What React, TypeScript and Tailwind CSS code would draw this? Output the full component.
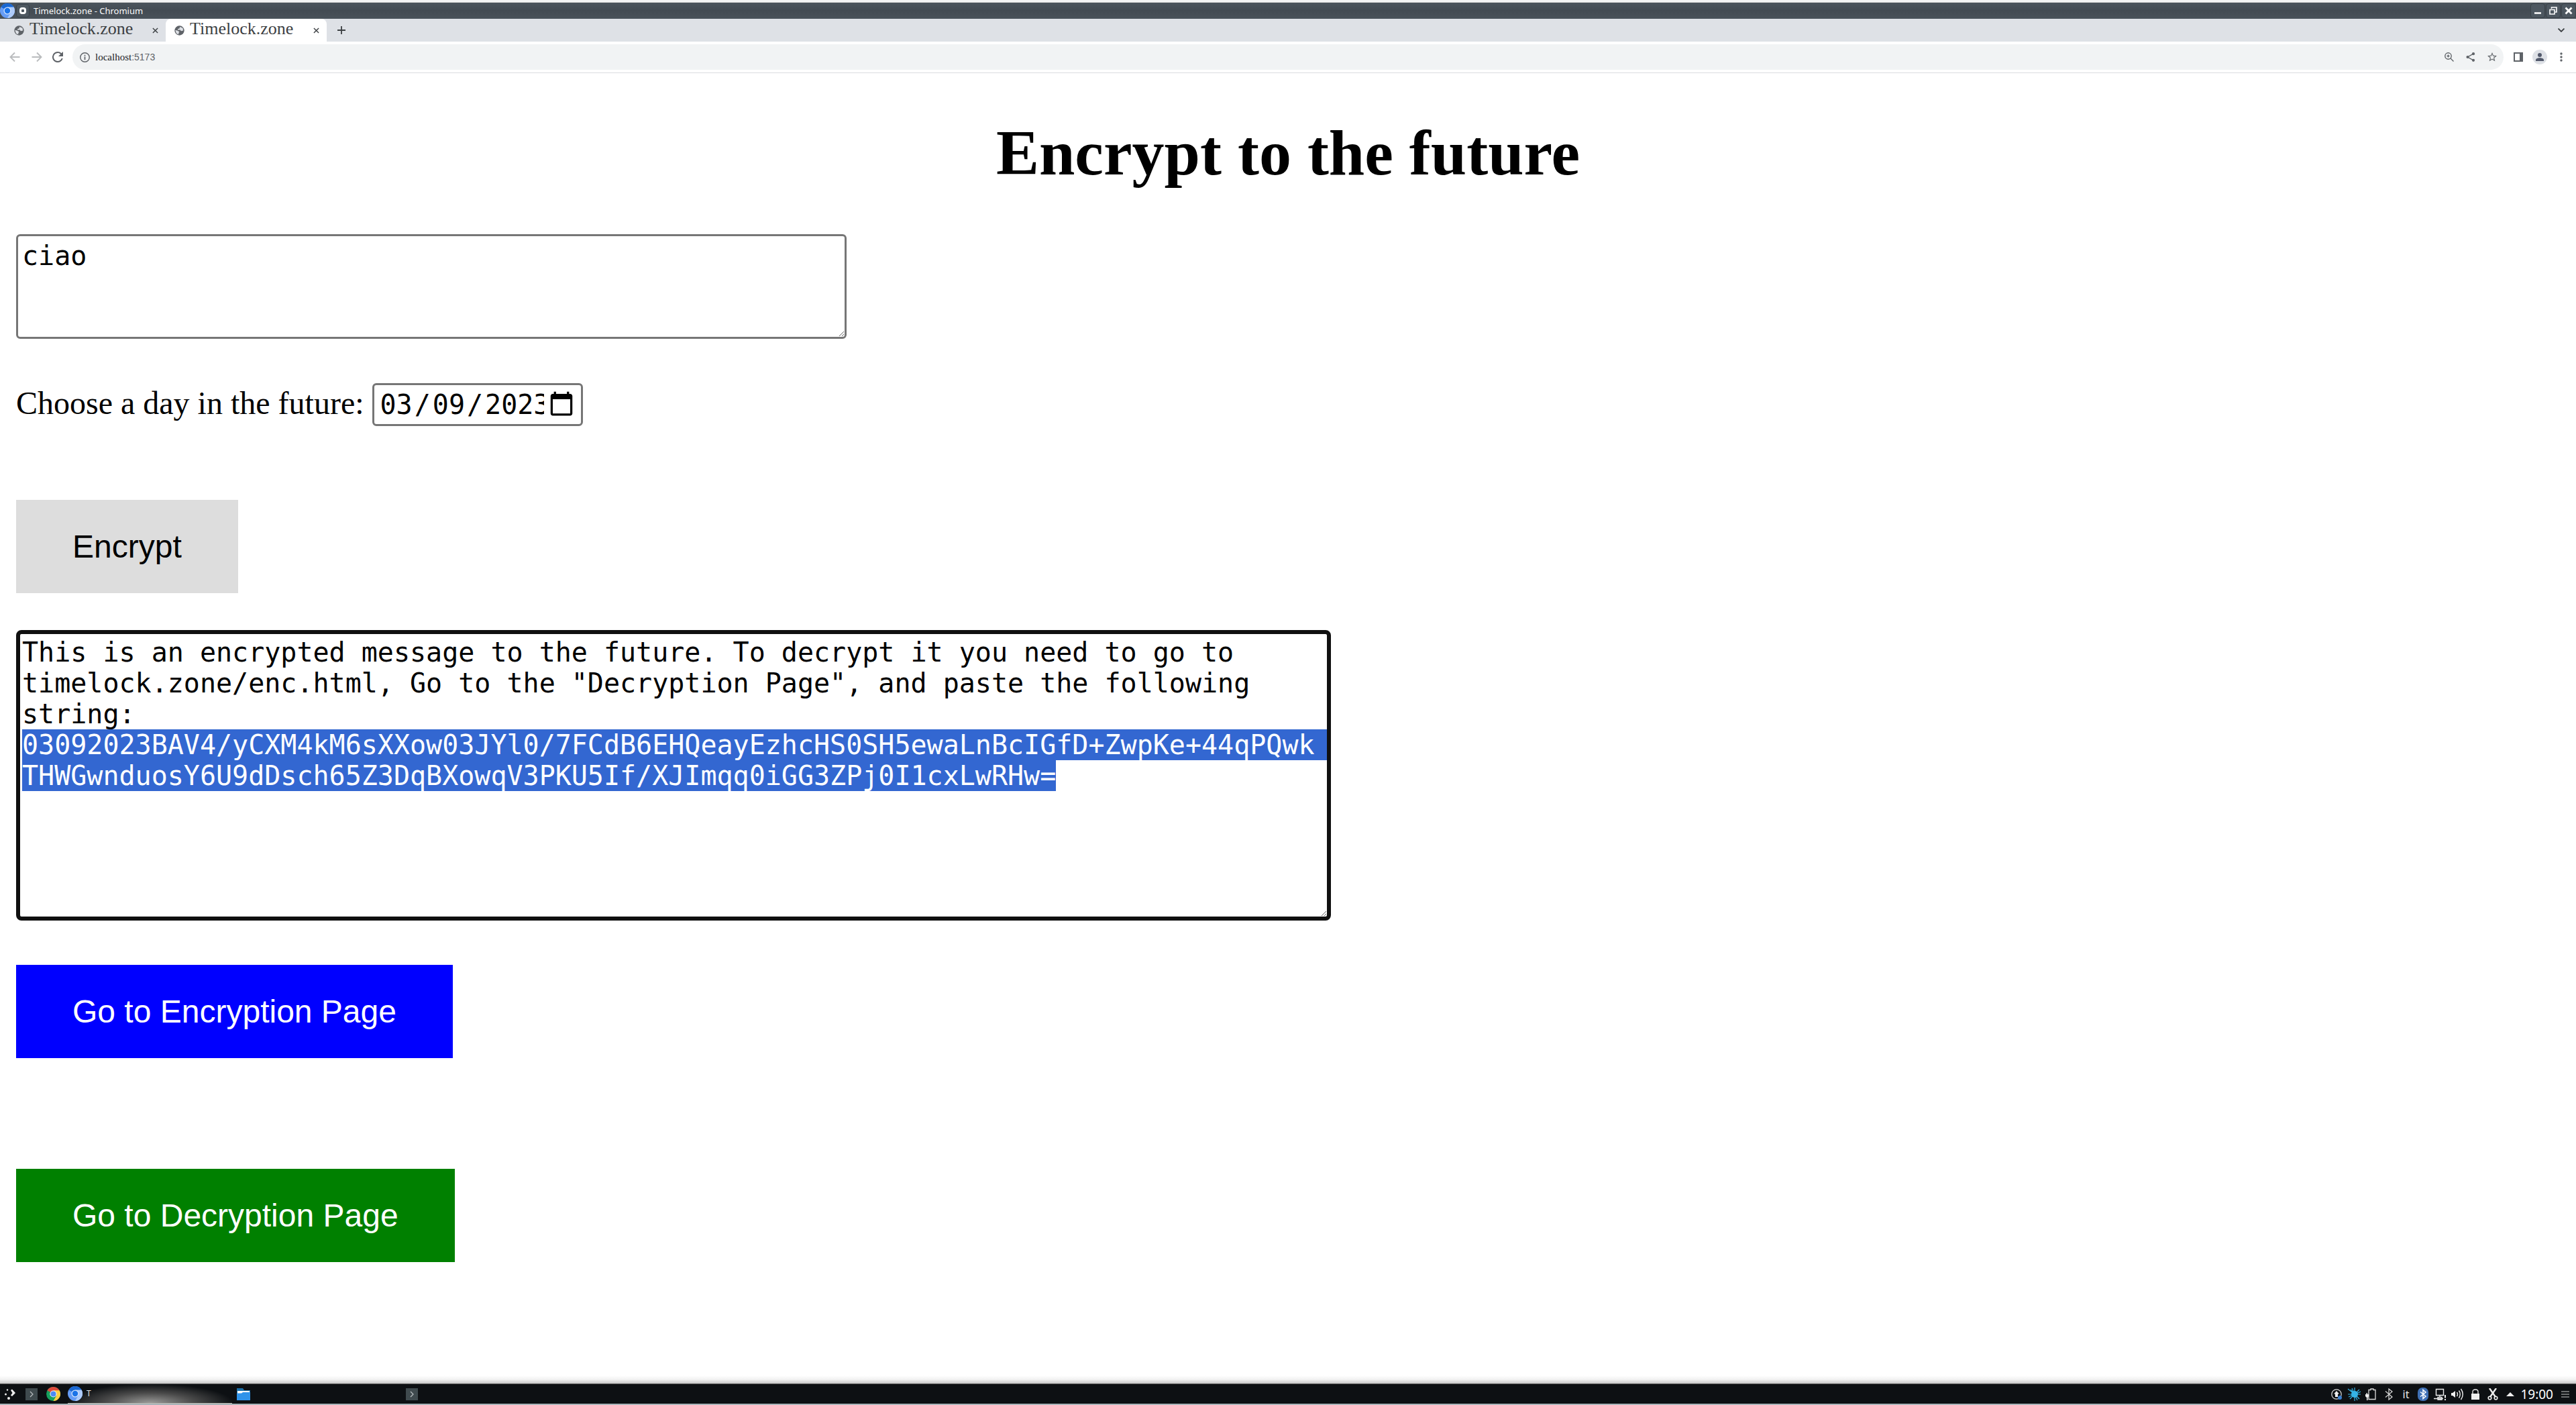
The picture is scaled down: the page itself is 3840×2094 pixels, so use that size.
import { useEffect, useRef, type ReactNode } from "react";

const MESSAGE =
  'This is an encrypted message to the future. To decrypt it you need to go to timelock.zone/enc.html, Go to the "Decryption Page", and paste the following string:\n';
const CIPHER =
  "03092023BAV4/yCXM4kM6sXXow03JYl0/7FCdB6EHQeayEzhcHS0SH5ewaLnBcIGfD+ZwpKe+44qPQwkTHWGwnduosY6U9dDsch65Z3DqBXowqV3PKU5If/XJImqq0iGG3ZPj0I1cxLwRHw=";

function Chromium({ className }: { className: string }) {
  return (
    <svg viewBox="0 0 24 24" className={className}>
      <circle cx="12" cy="12" r="12" fill="#669df6" />
      <path d="M12 12 L1.6 6 A12 12 0 0 1 22.4 6 Z" fill="#1967d2" />
      <path d="M12 6 H22.4 A12 12 0 0 1 12 24 L17.2 15 Z" fill="#aecbfa" />
      <circle cx="12" cy="12" r="6" fill="#d2e3fc" />
      <circle cx="12" cy="12" r="4.6" fill="#1a73e8" />
    </svg>
  );
}

function Chrome({ className }: { className: string }) {
  return (
    <svg viewBox="0 0 24 24" className={className}>
      <circle cx="12" cy="12" r="12" fill="#16a05d" />
      <path d="M12 12 L1.6 6 A12 12 0 0 1 22.4 6 Z" fill="#de4a3c" />
      <path d="M12 6 H22.4 A12 12 0 0 1 12 24 L17.2 15 Z" fill="#ffcd42" />
      <circle cx="12" cy="12" r="5.8" fill="#f1f1f1" />
      <circle cx="12" cy="12" r="4.6" fill="#4a8af4" />
    </svg>
  );
}

function Globe() {
  return (
    <svg viewBox="0 0 24 24" className="size-[15px] shrink-0">
      <circle cx="12" cy="12" r="11.5" fill="#5f6368" />
      <path d="M13 3 L20 6 L21 12 L16 13 L13 10 L9 11 L8 8 L12 7 Z" fill="#dee1e6" />
      <path d="M2 11 L7 12 L12 15 L10 18 L10 21 L5 19 Z" fill="#dee1e6" />
    </svg>
  );
}

function Tab({ active }: { active?: boolean }) {
  return (
    <div
      className={
        active
          ? "flex h-full w-[240px] items-center rounded-t-lg bg-white pl-[13px] pr-[11px]"
          : "flex h-full w-[247px] items-center pl-[21px] pr-[11px]"
      }
    >
      <Globe />
      <span className="ml-2 flex-1 pb-1 font-['Liberation_Serif',serif] text-[26px] leading-[30px] text-[#3c4043]">
        Timelock.zone
      </span>
      <button aria-label="Close tab">
        <svg viewBox="0 0 10 10" className="size-[9px]">
          <path d="M1 1 L9 9 M9 1 L1 9" stroke="#3c4043" strokeWidth="1.6" fill="none" />
        </svg>
      </button>
    </div>
  );
}

function WindowButton({ label, children }: { label: string; children: ReactNode }) {
  return (
    <button
      aria-label={label}
      className="flex h-[22px] w-[22px] items-center justify-center rounded-sm border border-[#3a4249] bg-[#4d5760]"
    >
      {children}
    </button>
  );
}

function BrowserChrome() {
  return (
    <header className="shrink-0">
      <div className="h-1 border-b border-[#d4d4d4] bg-[#f4f4f4]" />
      <div className="flex h-6 items-center bg-linear-to-b from-[#4b545c] via-[#434b53] to-[#49525a]">
        <Chromium className="size-[22px]" />
        <span className="ml-0.5 flex h-5 w-5 items-center justify-center rounded-sm border border-[#39424a] bg-[#4d5760]">
          <span className="size-[10px] rounded-[4px] border-[3px] border-white" />
        </span>
        <span className="ml-[6px] flex-1 font-['Noto_Sans',sans-serif] text-[13px] leading-6 text-[#fcfcfc]">
          Timelock.zone - Chromium
        </span>
        <div className="flex gap-px">
          <WindowButton label="Minimize">
            <svg viewBox="0 0 12 12" className="size-3">
              <path d="M1 9.5 H11" stroke="#fff" strokeWidth="2.5" />
            </svg>
          </WindowButton>
          <WindowButton label="Restore">
            <svg viewBox="0 0 12 12" className="size-3">
              <path d="M3.5 3 V1 H11 V8 H9 M1 4.5 H8 V11 H1 Z" stroke="#fff" strokeWidth="1.6" fill="none" />
            </svg>
          </WindowButton>
          <WindowButton label="Close">
            <svg viewBox="0 0 12 12" className="size-3">
              <path d="M1.5 1.5 L10.5 10.5 M10.5 1.5 L1.5 10.5" stroke="#fff" strokeWidth="2.8" />
            </svg>
          </WindowButton>
        </div>
      </div>
      <div className="flex h-[34px] items-center bg-[#dee1e6]">
        <Tab />
        <Tab active />
        <button aria-label="New tab" className="ml-4">
          <svg viewBox="0 0 12 12" className="size-3">
            <path d="M6 0 V12 M0 6 H12" stroke="#3c4043" strokeWidth="1.8" />
          </svg>
        </button>
        <button aria-label="Search tabs" className="ml-auto mr-[17px]">
          <svg viewBox="0 0 10 6" className="h-[6px] w-[10px]">
            <path d="M0.5 0.5 L5 5 L9.5 0.5" stroke="#3c4043" strokeWidth="1.8" fill="none" />
          </svg>
        </button>
      </div>
      <div className="flex h-[47px] items-center border-b border-[#dadce0] bg-white pl-[14px] text-[#5f6368]">
        <button aria-label="Back">
          <svg viewBox="0 0 16 16" className="size-4 text-[#babcbe]">
            <path d="M15.5 8 H2 M8 1.5 L1.5 8 L8 14.5" stroke="currentColor" strokeWidth="1.9" fill="none" />
          </svg>
        </button>
        <button aria-label="Forward" className="ml-[17px]">
          <svg viewBox="0 0 16 16" className="size-4 text-[#babcbe]">
            <path d="M0.5 8 H14 M8 1.5 L14.5 8 L8 14.5" stroke="currentColor" strokeWidth="1.9" fill="none" />
          </svg>
        </button>
        <button aria-label="Reload" className="ml-[15px]">
          <svg viewBox="4 4 16 16" className="size-4">
            <path
              fill="currentColor"
              d="M17.65 6.35A7.958 7.958 0 0 0 12 4a8 8 0 1 0 7.73 10h-2.08A6 6 0 1 1 12 6c1.66 0 3.14.69 4.22 1.78L13 11h7V4l-2.35 2.35z"
            />
          </svg>
        </button>
        <div className="ml-[14px] flex h-[38px] flex-1 items-center rounded-full bg-[#f1f3f4] pl-[11px] pr-[10px]">
          <svg viewBox="0 0 16 16" className="size-[15px]">
            <circle cx="8" cy="8" r="7.2" stroke="currentColor" strokeWidth="1.5" fill="none" />
            <path d="M8 7 V12 M8 4 V5.8" stroke="currentColor" strokeWidth="1.8" />
          </svg>
          <span className="ml-2 flex-1 font-['Liberation_Serif',serif] text-[15px] leading-5 text-[#202124]">
            localhost
            <span className="font-['Liberation_Sans',sans-serif] text-[14px] text-[#5f6368]">:5173</span>
          </span>
          <div className="flex items-center gap-[18px]">
            <button aria-label="Zoom">
              <svg viewBox="0 0 14 14" className="size-[14px]">
                <circle cx="5.5" cy="5.5" r="4.7" stroke="currentColor" strokeWidth="1.4" fill="none" />
                <path d="M9 9 L13.5 13.5 M5.5 3.5 V7.5 M3.5 5.5 H7.5" stroke="currentColor" strokeWidth="1.4" />
              </svg>
            </button>
            <button aria-label="Share">
              <svg viewBox="0 0 14 14" className="size-[14px]">
                <path d="M11 2.2 L2.5 7 L11 11.8" stroke="currentColor" strokeWidth="1.4" fill="none" />
                <g fill="currentColor">
                  <circle cx="11" cy="2.2" r="2.1" />
                  <circle cx="2.5" cy="7" r="2.1" />
                  <circle cx="11" cy="11.8" r="2.1" />
                </g>
              </svg>
            </button>
            <button aria-label="Bookmark">
              <svg viewBox="2 2 20 20" className="size-[14px]">
                <path
                  fill="currentColor"
                  d="M22 9.24l-7.19-.62L12 2 9.19 8.63 2 9.24l5.46 4.73L5.82 21 12 17.27 18.18 21l-1.63-7.03L22 9.24zM12 15.4l-3.76 2.27 1-4.28-3.32-2.88 4.38-.38L12 6.1l1.71 4.04 4.38.38-3.32 2.88 1 4.28L12 15.4z"
                />
              </svg>
            </button>
          </div>
        </div>
        <button aria-label="Side panel" className="ml-[15px]">
          <svg viewBox="0 0 14 14" className="size-[14px]">
            <path d="M1 1 H13 V13 H1 Z" stroke="currentColor" strokeWidth="2" fill="none" />
            <path d="M9 1 H13 V13 H9 Z" fill="currentColor" />
          </svg>
        </button>
        <button
          aria-label="Profile"
          className="ml-[14px] flex size-[22px] items-center justify-center rounded-full bg-[#dee1e6]"
        >
          <svg viewBox="0 0 12 12" className="size-3 text-[#52596b]">
            <circle cx="6" cy="3" r="3" fill="currentColor" />
            <path d="M0 12 V10.5 C0 8.5 3 7.3 6 7.3 S12 8.5 12 10.5 V12 Z" fill="currentColor" />
          </svg>
        </button>
        <button aria-label="Menu" className="ml-[19px] mr-5">
          <svg viewBox="0 0 4 14" className="h-[14px] w-1" fill="currentColor">
            <circle cx="2" cy="2" r="1.7" />
            <circle cx="2" cy="7" r="1.7" />
            <circle cx="2" cy="12" r="1.7" />
          </svg>
        </button>
      </div>
    </header>
  );
}

function Konsole() {
  return (
    <svg viewBox="0 0 18 18" className="size-[18px]">
      <rect width="18" height="18" fill="#3f4a4e" />
      <path d="M7 5 L11 9 L7 13" stroke="#b8bec0" strokeWidth="1.2" fill="none" />
    </svg>
  );
}

function Taskbar() {
  return (
    <footer className="shrink-0">
      <div className="h-3 bg-linear-to-b from-white via-[#f2f2f2] to-[#c8c8c8]" />
      <div className="flex h-[30px] items-center border-t border-[#555] bg-[#0d1013] text-[#e6e8e9]">
        <button aria-label="Application launcher" className="ml-[7px]">
          <svg viewBox="0 0 16 16" className="size-4" fill="#eee">
            <path d="M9 2 L11 0.5 L16 6 L11 11 L9 9.5 L11.5 6 Z" />
            <circle cx="4" cy="1.5" r="1.2" />
            <circle cx="1.5" cy="8" r="1.5" />
            <circle cx="6" cy="14" r="2" />
          </svg>
        </button>
        <button aria-label="Terminal" className="ml-[15px]">
          <Konsole />
        </button>
        <button aria-label="Chrome" className="ml-[13px]">
          <Chrome className="size-[21px]" />
        </button>
        <button className="ml-[11px] flex h-full w-[245px] items-center border-b border-[#b8b8b0] bg-[radial-gradient(ellipse_at_bottom,#9a9a98_0%,#4a4a4a_38%,#0d1013_72%)] text-left font-['Noto_Sans',sans-serif] text-[12px]">
          <Chromium className="size-[22px]" />
          <span className="ml-[6px]">T</span>
        </button>
        <button aria-label="Files" className="ml-[7px]">
          <svg viewBox="0 0 20 18" className="h-[18px] w-5">
            <path d="M0 0 H9 L11 3 H20 V10 H0 Z" fill="#1b6fa8" />
            <path d="M1 4 H19 V10 H1 Z" fill="#fff" />
            <path d="M0 7.5 H7 L9 6 H20 V18 H0 Z" fill="#2f93ea" />
          </svg>
        </button>
        <button aria-label="Terminal window" className="ml-[232px]">
          <Konsole />
        </button>
        <div className="ml-auto flex items-center pr-[10px]">
          <svg viewBox="0 0 16 16" className="size-4">
            <circle cx="8" cy="8" r="7.2" stroke="#ddd" strokeWidth="1.2" fill="none" />
            <path d="M8 3 L12 7.5 H10 V12 H6 V7.5 H4 Z" fill="#eee" />
            <circle cx="13" cy="13" r="3" fill="#3a7fd0" />
          </svg>
          <svg viewBox="0 0 20 20" className="ml-2 size-5">
            <circle cx="11" cy="10" r="5" fill="#35b3e6" />
            <path
              d="M1 2 L11 10 M11 0 V20 M1 10 H20 M4 17 L18 3 M5 3 L18 17 M7 1 L15 19 M2 14 L20 6"
              stroke="#35b3e6"
              strokeWidth="1.2"
            />
          </svg>
          <svg viewBox="0 0 16 18" className="ml-[7px] h-[18px] w-4">
            <path d="M5 16.5 V2.5 H8 V1 H12 V2.5 H15 V16.5 Z" stroke="#ddd" strokeWidth="1.3" fill="none" />
            <path d="M0 9 H1.5 V7 H3 V9 H5 V12 L3.5 14 V18 H2 V14 L0 12 Z" fill="#eee" />
          </svg>
          <svg viewBox="0 0 14 18" className="ml-3 h-[18px] w-[14px]">
            <path d="M2 4.5 L12 13 L7 17 V1 L12 5 L2 13.5" stroke="#ddd" strokeWidth="1.2" fill="none" />
          </svg>
          <span className="ml-[14px] font-['Noto_Sans',sans-serif] text-[16px] leading-5">it</span>
          <svg viewBox="0 0 16 20" className="ml-[13px] h-5 w-4">
            <rect width="16" height="20" rx="7" fill="#3f70b5" />
            <path d="M4 6.5 L12 13 L8 16.5 V3.5 L12 7 L4 13.5" stroke="#fff" strokeWidth="1.5" fill="none" />
          </svg>
          <svg viewBox="0 0 19 18" className="ml-[8px] h-[18px] w-[19px]">
            <path
              d="M3.5 1.5 H14.5 V10.5 H3.5 Z M9 10.5 V14 M0 15.5 H14 M6 13.5 H12 V17 H6 Z"
              stroke="#eee"
              strokeWidth="1.4"
              fill="none"
            />
            <path d="M17 10 V14.5 M17 16 V18" stroke="#eee" strokeWidth="2" />
          </svg>
          <svg viewBox="0 0 19 18" className="ml-[7px] h-[18px] w-[19px]">
            <path d="M0 7 H2 L6 4 V14 L2 11 H0 Z" fill="#eee" />
            <path
              d="M8.5 6 Q10.5 9 8.5 12 M11.5 3.5 Q15 9 11.5 14.5 M14.5 1 Q20 9 14.5 17"
              stroke="#eee"
              strokeWidth="1.4"
              fill="none"
            />
          </svg>
          <svg viewBox="0 0 12 18" className="ml-[11px] h-[18px] w-3">
            <path d="M2 9 V5 Q2 2 6 2 T10 5 V9" stroke="#eee" strokeWidth="1.3" fill="none" />
            <rect y="8" width="12" height="9" fill="#eee" />
          </svg>
          <svg viewBox="0 0 16 18" className="ml-3 h-[18px] w-4">
            <path d="M3 0 L12 13 M13 0 L4 13" stroke="#eee" strokeWidth="2.4" />
            <circle cx="3.5" cy="14.5" r="2.3" stroke="#eee" strokeWidth="1.6" fill="none" />
            <circle cx="12.5" cy="14.5" r="2.3" stroke="#eee" strokeWidth="1.6" fill="none" />
          </svg>
          <svg viewBox="0 0 12 6" className="ml-3 h-[6px] w-3">
            <path d="M6 0 L12 6 H0 Z" fill="#eee" />
          </svg>
          <span className="ml-[9px] font-['Noto_Sans',sans-serif] text-[19px] leading-6 text-white">19:00</span>
          <svg viewBox="0 0 12 10" className="ml-3 h-[10px] w-3">
            <path d="M0 1 H12 M0 5 H12 M0 9 H12" stroke="#8a8d8f" strokeWidth="1.6" />
          </svg>
        </div>
      </div>
      <div className="h-0.5 bg-[#a9b5ba]" />
    </footer>
  );
}

export default function App() {
  const output = useRef<HTMLTextAreaElement>(null);

  useEffect(() => {
    output.current?.focus();
    output.current?.setSelectionRange(MESSAGE.length, MESSAGE.length + CIPHER.length);
  }, []);

  return (
    <div className="flex min-h-screen flex-col bg-white text-black">
      <BrowserChrome />
      <main className="flex flex-1 flex-col items-start px-6 pt-16 font-['Liberation_Serif',serif] text-[48px] leading-[55px]">
        <h1 className="self-center text-[96px] leading-[110px] font-bold">Encrypt to the future</h1>
        <textarea
          aria-label="Message"
          rows={3}
          defaultValue="ciao"
          className="mt-[66px] w-[1238px] max-w-full rounded-md border-[3px] border-[#767676] p-[6px] font-['DejaVu_Sans_Mono',monospace] text-[40px] leading-[46px]"
        />
        <div className="mt-[66px] flex items-baseline gap-3">
          <label htmlFor="day">Choose a day in the future:</label>
          <input
            id="day"
            type="date"
            defaultValue="2023-03-09"
            className="h-16 w-[314px] rounded-md border-[3px] border-[#767676] px-[6px] font-['DejaVu_Sans_Mono',monospace] text-[40px] leading-[46px] [&::-webkit-calendar-picker-indicator]:m-0 [&::-webkit-calendar-picker-indicator]:ml-[5px] [&::-webkit-calendar-picker-indicator]:mr-[2px] [&::-webkit-calendar-picker-indicator]:size-[42px] [&::-webkit-calendar-picker-indicator]:shrink-0 [&::-webkit-calendar-picker-indicator]:p-0 [&::-webkit-datetime-edit]:min-w-0 [&::-webkit-datetime-edit]:overflow-hidden [&::-webkit-datetime-edit-day-field]:px-[3px] [&::-webkit-datetime-edit-month-field]:px-[3px] [&::-webkit-datetime-edit-year-field]:px-[3px]"
          />
        </div>
        <button className="mt-[110px] bg-[#dddddd] px-[84px] py-[42px] font-['Liberation_Sans',sans-serif]">
          Encrypt
        </button>
        <textarea
          ref={output}
          aria-label="Encrypted message"
          rows={9}
          defaultValue={MESSAGE + CIPHER}
          className="mt-[55px] h-[433px] w-[1960px] max-w-full rounded-lg border-[6px] border-[#101010] px-[3px] py-1 font-['DejaVu_Sans_Mono',monospace] text-[40px] leading-[46px] outline-none selection:bg-[#3367d1] selection:text-white"
        />
        <button className="mt-[66px] bg-[#0000ff] px-[84px] py-[42px] font-['Liberation_Sans',sans-serif] text-white">
          Go to Encryption Page
        </button>
        <button className="mt-[165px] bg-[#008000] px-[84px] py-[42px] font-['Liberation_Sans',sans-serif] text-white">
          Go to Decryption Page
        </button>
      </main>
      <Taskbar />
    </div>
  );
}
